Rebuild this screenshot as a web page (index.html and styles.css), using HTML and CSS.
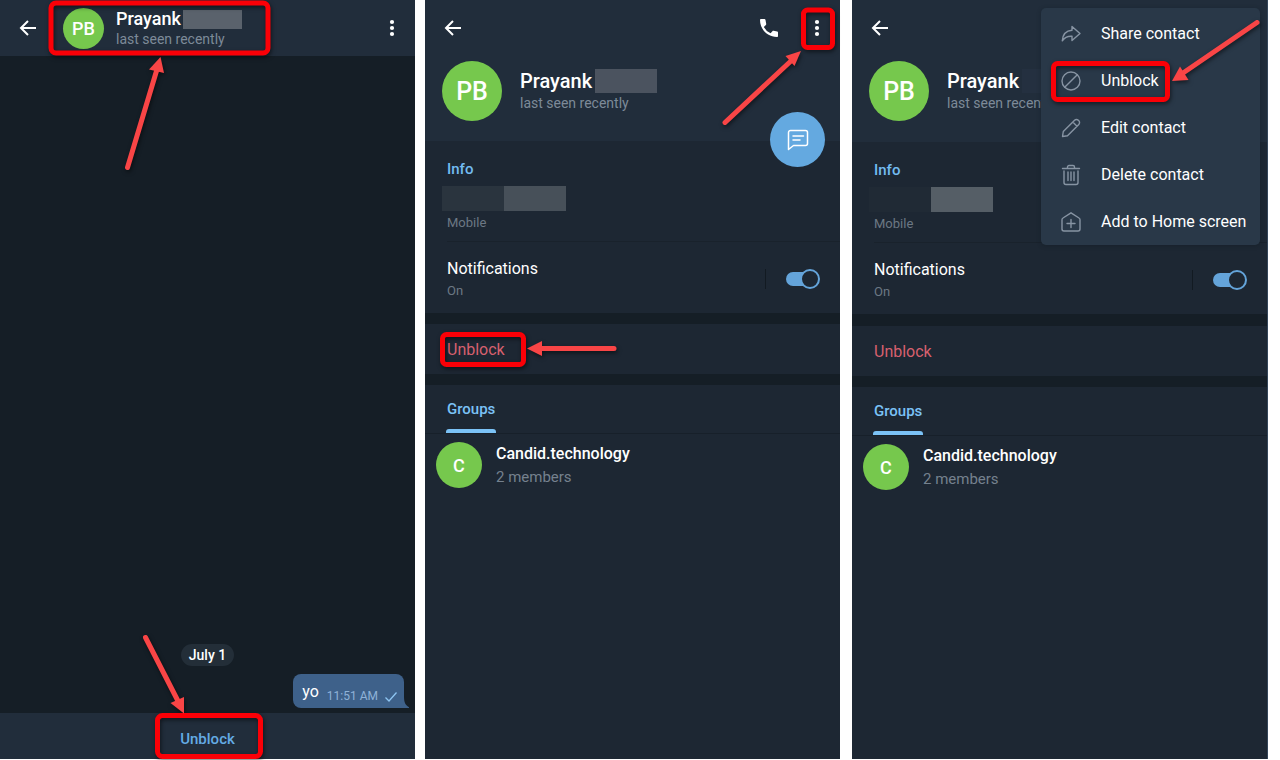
FILE: index.html
```html
<!DOCTYPE html>
<html lang="en">
<head>
<meta charset="utf-8">
<title>Unblock a contact</title>
<link rel="stylesheet" href="styles.css">
</head>
<body>
<svg class="sprite" aria-hidden="true">
  <symbol id="back" viewBox="0 0 18 18"><path d="M17 9H2.500M9 2L2 9l7 7" fill="none" stroke="#fff" stroke-width="2"/></symbol>
  <symbol id="dots" viewBox="0 0 6 18"><g fill="#fff"><circle cx="3" cy="3" r="2.100"/><circle cx="3" cy="9" r="2.100"/><circle cx="3" cy="15" r="2.100"/></g></symbol>
</svg>
<main class="steps">

  <section class="panel chat">
    <header class="chat-head">
      <button class="icon-btn" aria-label="Back"><svg width="18" height="18"><use href="#back"/></svg></button>
      <span class="avatar avatar-s">PB</span>
      <div class="who">
        <h2 class="name">Prayank <span class="mask"></span></h2>
        <p class="status">last seen recently</p>
      </div>
      <button class="icon-btn push" aria-label="More options"><svg width="6" height="18"><use href="#dots"/></svg></button>
    </header>
    <div class="messages">
      <time class="date">July 1</time>
      <div class="bubble">
        <span>yo</span>
        <time class="time">11:51 AM</time>
        <svg width="14" height="12" viewBox="0 0 14 12"><path d="M1.500 6.500l3.500 3.500L12.500 1.500" fill="none" stroke="#8ec5f2" stroke-width="1.300"/></svg>
        <svg class="tail" width="8" height="12" viewBox="0 0 8 12"><path d="M0 0h2c0 6 1 9 5 11.200V12H0z" fill="#3e618a"/></svg>
      </div>
    </div>
    <footer class="chat-foot"><button class="foot-btn">Unblock</button></footer>
    <svg class="mark mark-top-left" width="280" height="180" aria-hidden="true">
      <rect class="box" x="51" y="3" width="217" height="50" rx="5"/>
      <path class="shaft" d="M127.500 167.500L158 66"/><path class="tip" d="M160.500 57L149 69.500l15 3.500z"/>
    </svg>
    <svg class="mark mark-bottom-left" width="280" height="130" aria-hidden="true">
      <rect class="box" x="157.500" y="86.500" width="103" height="41" rx="5"/>
      <path class="shaft" d="M145.500 8.500L179 74"/><path class="tip" d="M184 84.500L170.500 74l13.500-6z"/>
    </svg>
  </section>

  <section class="panel">
    <header class="head">
      <div class="bar">
        <button class="icon-btn" aria-label="Back"><svg width="18" height="18"><use href="#back"/></svg></button>
        <button class="icon-btn push" aria-label="Call"><svg width="20" height="20" viewBox="0 0 20 20"><path d="M4.500 1H1.900C1.300 1 1 1.400 1 2c0 9.400 7.600 17 17 17 .6 0 1-.4 1-1v-3.500c0-.5-.3-.9-.8-1l-3.600-.8c-.4-.1-.8 0-1 .3l-2 2.200A14 14 0 0 1 4.800 8.900l2.100-2c.3-.3.400-.7.300-1.100L6.500 1.900C6.400 1.300 6 1 5.500 1z" fill="#fff"/></svg></button>
        <button class="icon-btn more" aria-label="More options"><svg width="6" height="18"><use href="#dots"/></svg></button>
      </div>
      <div class="profile">
        <span class="avatar avatar-l">PB</span>
        <div>
          <h2 class="name name-l">Prayank <span class="mask mask-l"></span></h2>
          <p class="status">last seen recently</p>
        </div>
      </div>
      <button class="fab" aria-label="Send message"><svg width="22" height="22" viewBox="0 0 22 22"><path d="M3.500 1.500h15a2 2 0 0 1 2 2v11a2 2 0 0 1-2 2H6.500L1.500 20.500v-17a2 2 0 0 1 2-2zM6 7h10.500M6 11h7" fill="none" stroke="#fff" stroke-width="1.500" stroke-linejoin="round" stroke-linecap="round"/></svg></button>
    </header>
    <div class="info">
      <h3 class="label">Info</h3>
      <div class="phone"><span></span><span></span></div>
      <p class="sub">Mobile</p>
    </div>
    <label class="notify">
      <span class="notify-text"><span class="title">Notifications</span><span class="sub">On</span></span>
      <span class="rule"></span>
      <input class="switch" type="checkbox" role="switch" checked>
    </label>
    <div class="gap"></div>
    <button class="row-btn">Unblock</button>
    <div class="gap"></div>
    <nav class="tabs"><button class="tab">Groups</button></nav>
    <div class="group">
      <span class="avatar avatar-m">C</span>
      <div><h4 class="group-name">Candid.technology</h4><p class="members">2 members</p></div>
    </div>
    <svg class="mark mark-top-right" width="125" height="140" aria-hidden="true">
      <rect class="box" x="88.500" y="10" width="29" height="37.500" rx="4"/>
      <path class="shaft" d="M10 122.500L77 60"/><path class="tip" d="M86 51L70.500 56l9 10z"/>
    </svg>
    <svg class="mark mark-row" width="210" height="50" aria-hidden="true">
      <rect class="box" x="17.500" y="14.500" width="81" height="30" rx="4"/>
      <path class="shaft" d="M189 28.500H114"/><path class="tip" d="M102 28.500L117 21v15z"/>
    </svg>
  </section>

  <section class="panel panel-menu">
    <header class="head">
      <div class="bar">
        <button class="icon-btn" aria-label="Back"><svg width="18" height="18"><use href="#back"/></svg></button>
      </div>
      <div class="profile">
        <span class="avatar avatar-l">PB</span>
        <div>
          <h2 class="name name-l">Prayank <span class="mask mask-l"></span></h2>
          <p class="status">last seen recently</p>
        </div>
      </div>
    </header>
    <div class="info">
      <h3 class="label">Info</h3>
      <div class="phone"><span></span><span></span></div>
      <p class="sub">Mobile</p>
    </div>
    <label class="notify">
      <span class="notify-text"><span class="title">Notifications</span><span class="sub">On</span></span>
      <span class="rule"></span>
      <input class="switch" type="checkbox" role="switch" checked>
    </label>
    <div class="gap"></div>
    <button class="row-btn">Unblock</button>
    <div class="gap"></div>
    <nav class="tabs"><button class="tab">Groups</button></nav>
    <div class="group">
      <span class="avatar avatar-m">C</span>
      <div><h4 class="group-name">Candid.technology</h4><p class="members">2 members</p></div>
    </div>
    <div class="menu">
      <button class="item"><svg class="glyph" viewBox="0 0 20 20"><path d="M11 2.500l8 7-8 7v-4.200c-4.500-.3-7.500 1.200-9.700 4.500C1.700 11 4.500 6.800 11 6.300z"/></svg>Share contact</button>
      <button class="item"><svg class="glyph" viewBox="0 0 20 20"><circle cx="10" cy="10" r="9"/><path d="M3.700 16.300L16.300 3.700"/></svg>Unblock</button>
      <button class="item"><svg class="glyph" viewBox="0 0 20 20"><path d="M1.500 18.500l.8-5L13.600 2.200a2.600 2.600 0 0 1 3.700 0l.5.5a2.600 2.600 0 0 1 0 3.700L6.500 17.700zM11.800 4l4.200 4.200"/></svg>Edit contact</button>
      <button class="item"><svg class="glyph" viewBox="0 0 20 22"><path d="M1.500 4.500h17M6.500 4.300V3a1.500 1.500 0 0 1 1.500-1.500h4A1.500 1.500 0 0 1 13.500 3v1.300M3 7v11.500a2 2 0 0 0 2 2h10a2 2 0 0 0 2-2V7M7 8v8.500M10 8v8.500M13 8v8.500"/></svg>Delete contact</button>
      <button class="item"><svg class="glyph" viewBox="0 0 20 20"><path d="M10 .8L2 6a2 2 0 0 0-1 1.800V17a2 2 0 0 0 2 2h14a2 2 0 0 0 2-2V7.800A2 2 0 0 0 18 6zM10 7.500v8M6 11.500h8"/></svg>Add to Home screen</button>
      <svg class="mark mark-menu" width="230" height="110" aria-hidden="true">
        <rect class="box" x="12.500" y="55.500" width="114" height="36" rx="4"/>
        <path class="shaft" d="M216 14.500L142 65"/><path class="tip" d="M131 73L139 58.500l8.500 13.500z"/>
      </svg>
    </div>
  </section>
</main>
</body>
</html>
```

FILE: styles.css
```css
*, *::before, *::after { box-sizing: border-box; }
body { margin: 0; background: #fff; font-family: Roboto, "Liberation Sans", sans-serif; color: #fff; }
h2, h3, h4, p { margin: 0; font-weight: 400; }
button { border: 0; padding: 0; background: none; color: inherit; font: inherit; cursor: pointer; }
svg { display: block; }
.sprite { position: absolute; width: 0; height: 0; }

.steps { display: flex; gap: 10px; min-height: 100vh; padding: 0 12px 1px 0; }
.panel { position: relative; flex: 1; min-width: 0; display: flex; flex-direction: column; background: #1d2733; }
.panel-menu { margin-left: 2px; border-right: 1px solid #34465a; }

.icon-btn { display: flex; }
.push { margin-left: auto; }
.avatar { flex: none; display: flex; align-items: center; justify-content: center; border-radius: 50%; background: #76c84d; font-weight: 500; }
.avatar-s { width: 41px; height: 41px; font-size: 18px; }
.avatar-m { width: 46px; height: 46px; font-size: 18px; }
.avatar-l { width: 60px; height: 60px; font-size: 25px; }
.name { display: flex; align-items: center; font-size: 18px; line-height: 20px; font-weight: 500; }
.name-l { font-size: 20px; line-height: 24px; }
.status { font-size: 14px; line-height: 20px; color: #7d8a98; }
.mask { width: 59px; height: 19px; margin-left: 2px; background: #5a626c; }
.mask-l { width: 62px; height: 24px; margin-left: 3px; background: #4b535f; }
.panel-menu .mask-l { background: #243040; }

/* Chat */
.chat { background: #151e26; }
.chat-head { display: flex; align-items: center; height: 56px; padding: 0 20px 0 19px; background: #212d3b; }
.chat-head .avatar { margin-left: 26px; }
.who { margin-left: 12px; padding-top: 2px; }
.messages { flex: 1; display: flex; flex-direction: column; justify-content: flex-end; gap: 8px; padding: 0 11px 5px; }
.date { align-self: center; padding: 0 8px; border-radius: 11px; background: #232e38; font-size: 14px; line-height: 22px; font-weight: 500; }
.bubble { position: relative; align-self: flex-end; display: flex; align-items: flex-end; height: 34px; padding: 0 6px 5px 9px; border-radius: 8px 8px 0 8px; background: #3e618a; font-size: 16px; line-height: 22px; }
.time { margin: 0 6px 0 8px; font-size: 12px; line-height: 13px; color: #8fb2d8; }
.tail { position: absolute; right: -6px; bottom: 0; }
.chat-foot { display: flex; justify-content: center; height: 46px; padding-top: 6px; background: #212d3b; }
.foot-btn { font-size: 15px; font-weight: 500; color: #64abe4; }

/* Contact profile */
.head { position: relative; padding-bottom: 20px; background: #212d3b; }
.panel-menu .head { padding-bottom: 21px; }
.bar { display: flex; align-items: center; height: 56px; margin-bottom: 5px; padding: 0 20px 0 19px; }
.more { margin-left: 35px; }
.profile { display: flex; align-items: center; gap: 18px; padding-left: 17px; }
.fab { position: absolute; right: 15px; bottom: -26px; width: 55px; height: 55px; display: flex; align-items: center; justify-content: center; border-radius: 50%; background: #64a9e0; }
.info { padding: 18px 0 8px; margin-left: 22px; border-bottom: 1px solid #19222c; }
.label { font-size: 15px; line-height: 20px; font-weight: 500; color: #73bcf1; }
.phone { display: flex; margin: 7px 0 2px -5px; }
.phone span { width: 62px; height: 25px; background: #2a343e; }
.phone span + span { background: #475059; }
.panel-menu .phone span { background: #202a35; }
.panel-menu .phone span + span { background: #555e66; }
.sub { font-size: 13px; line-height: 20px; color: #6c7884; }
.notify { display: flex; align-items: center; gap: 20px; padding: 15px 20px 12px 22px; }
.notify-text { flex: 1; display: flex; flex-direction: column; }
.title { font-size: 16px; line-height: 24px; }
.rule { width: 1px; height: 20px; background: #121a22; }
.switch { appearance: none; position: relative; width: 34px; height: 20px; margin: 0; }
.switch::before { content: ""; position: absolute; left: 0; top: 3px; width: 28px; height: 14px; border-radius: 7px; background: #64a4da; }
.switch::after { content: ""; position: absolute; right: 0; top: 0; width: 20px; height: 20px; border: 2px solid #64a4da; border-radius: 50%; background: #1d2733; }
.gap { height: 11px; background: #151e26; }
.panel-menu .notify + .gap { height: 12px; }
.row-btn { height: 50px; padding-left: 22px; text-align: left; font-size: 16px; color: #d7606e; }
.tabs { display: flex; height: 49px; padding-left: 21px; border-bottom: 1px solid #17202a; }
.tab { position: relative; height: 48px; padding: 0 1px; font-size: 15px; line-height: 20px; font-weight: 500; color: #7bc2f6; }
.tab::after { content: ""; position: absolute; left: 0; right: 0; bottom: 0; height: 4px; border-radius: 3px 3px 0 0; background: #7bc2f6; }
.group { display: flex; align-items: center; gap: 14px; padding: 8px 11px; }
.group-name { font-size: 16px; line-height: 24px; font-weight: 500; }
.members { font-size: 15px; line-height: 22px; color: #75818e; }

/* Options menu */
.menu { position: absolute; top: 8px; right: 7px; width: 219px; padding-top: 2px; border-radius: 5px; background: #293848; box-shadow: 0 1px 4px #10182066; }
.item { display: flex; align-items: center; gap: 20px; width: 100%; height: 47px; padding-left: 20px; font-size: 16px; text-align: left; white-space: nowrap; }
.glyph { flex: none; width: 20px; height: 22px; fill: none; stroke: #8794a3; stroke-width: 1.4; stroke-linejoin: round; stroke-linecap: round; }

/* Callouts */
.mark { position: absolute; pointer-events: none; filter: drop-shadow(1px 2px 2px #0008); }
.mark-top-left { top: 0; left: 0; }
.mark-bottom-left { bottom: 0; left: 0; }
.mark-top-right { top: 0; right: 0; }
.mark-row { top: 320px; left: 0; }
.mark-menu { top: 0; left: 0; }
.box { fill: none; stroke: #fb0007; stroke-width: 5; }
.shaft { fill: none; stroke: #f94546; stroke-width: 5; stroke-linecap: round; }
.tip { fill: #f94546; }
```
